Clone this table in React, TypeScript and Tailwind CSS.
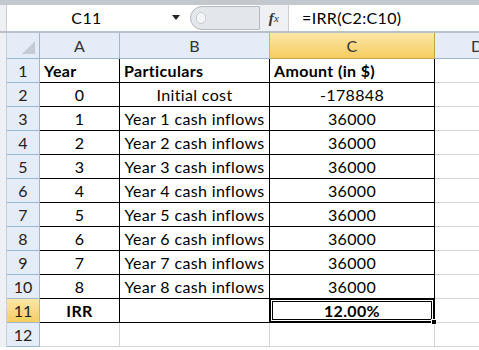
const rows: [string, string, string, string][] = [
  ["1", "Year", "Particulars", "Amount (in $)"],
  ["2", "0", "Initial cost", "-178848"],
  ["3", "1", "Year 1 cash inflows", "36000"],
  ["4", "2", "Year 2 cash inflows", "36000"],
  ["5", "3", "Year 3 cash inflows", "36000"],
  ["6", "4", "Year 4 cash inflows", "36000"],
  ["7", "5", "Year 5 cash inflows", "36000"],
  ["8", "6", "Year 6 cash inflows", "36000"],
  ["9", "7", "Year 7 cash inflows", "36000"],
  ["10", "8", "Year 8 cash inflows", "36000"],
];

function RowHead({ n, active }: { n: string; active?: boolean }) {
  return (
    <div
      className={`flex h-full w-[33px] shrink-0 items-center justify-center border-r border-b border-[#9eb6ce] tracking-normal text-[#222] ${
        active ? "bg-gradient-to-b from-[#fbe7a6] to-[#f5cd5f]" : "bg-[#e4ecf7]"
      }`}
    >
      {n}
    </div>
  );
}

export default function App() {
  return (
    <div
      className="h-[350px] w-[479px] overflow-hidden bg-white text-[16px] leading-none tracking-[0.35px] text-black"
      style={{ fontFamily: "Lato, 'Liberation Sans', sans-serif" }}
    >
      {/* formula bar */}
      <div className="flex h-[33px] border-t-[5px] border-b-2 border-[#b9c0c9] border-t-[#c3c8cf] bg-white">
        <div className="w-[7px] shrink-0 border-r border-[#c9ced5] bg-[#eef0f3]" />
        <div className="relative flex w-[183px] shrink-0 items-center justify-center">
          <span className="pr-[24px]">C11</span>
          <span className="absolute right-[10px] top-[10px] h-0 w-0 border-x-[4px] border-t-[5px] border-x-transparent border-t-[#222]" />
        </div>
        <div className="my-[1px] flex w-[70px] shrink-0 items-center rounded-l-full border border-[#b3b9c2] bg-[#e3e6ea] pl-[5px]">
          <span className="h-[12px] w-[10px] rounded-full border border-[#c9ccd1] bg-[#f3f4f6]" />
        </div>
        <div className="flex w-[28px] shrink-0 items-center justify-center bg-[#eef0f3] text-[15px] italic text-[#333]" style={{ fontFamily: "'Liberation Serif', serif" }}>
          <span className="font-bold">f</span>
          <span className="text-[11px]">x</span>
        </div>
        <div className="flex flex-1 items-center border-l border-[#c9ced5] pl-[13px]">=IRR(C2:C10)</div>
      </div>

      {/* column headers */}
      <div className="flex h-[26px]">
        <div className="w-[7px] shrink-0 border-r border-[#c9ced5] bg-[#eef0f3]" />
        <div className="relative w-[33px] shrink-0 border-r border-b border-[#9eb6ce] bg-[#e4ecf7]">
          <span className="absolute right-[4px] bottom-[4px] h-0 w-0 border-l-[13px] border-b-[13px] border-l-transparent border-b-[#c5cbd3]" />
        </div>
        <div className="flex w-[80px] shrink-0 items-center justify-center border-r border-b border-[#9eb6ce] bg-[#e4ecf7] text-[#333]">A</div>
        <div className="flex w-[150px] shrink-0 items-center justify-center border-r border-b border-[#9eb6ce] bg-[#e4ecf7] text-[#333]">B</div>
        <div className="flex w-[165px] shrink-0 items-center justify-center border-r border-b border-[#c7a24a] bg-gradient-to-b from-[#fbe7a6] to-[#f5cd5f] text-[#333]">C</div>
        <div className="flex flex-1 items-center border-b border-[#9eb6ce] bg-[#e4ecf7] pl-[36px] text-[#333]">D</div>
      </div>

      {rows.map(([n, a, b, c], i) => (
        <div key={n} className="flex h-[24px]">
          <div className="w-[7px] shrink-0 border-r border-[#c9ced5] bg-[#eef0f3]" />
          <RowHead n={n} />
          <div className={`flex w-[80px] shrink-0 items-center border-r border-b border-black ${i === 0 ? "pl-[4px] font-bold" : "justify-center"}`}>{a}</div>
          <div className={`flex w-[150px] shrink-0 items-center border-r border-b border-black ${i === 0 ? "pl-[4px] font-bold" : "justify-center"}`}>{b}</div>
          <div className={`flex w-[165px] shrink-0 items-center border-r border-b border-black ${i === 0 ? "pl-[4px] font-bold" : "justify-center"}`}>{c}</div>
          <div className="flex-1 border-b border-[#d4d4d4]" />
        </div>
      ))}

      {/* row 11 */}
      <div className="flex h-[24px]">
        <div className="w-[7px] shrink-0 border-r border-[#c9ced5] bg-[#eef0f3]" />
        <RowHead n="11" active />
        <div className="flex w-[80px] shrink-0 items-center justify-center border-r border-b border-black font-bold">IRR</div>
        <div className="w-[150px] shrink-0 border-b border-black" />
        <div className="relative -mt-[1px] -ml-[1px] flex h-[25px] w-[166px] shrink-0 border-2 border-black p-[1px]">
          <div className="flex flex-1 items-center justify-center border border-black font-bold">12.00%</div>
          <span className="absolute -right-[4px] -bottom-[4px] h-[6px] w-[6px] border border-white bg-black" />
        </div>
        <div className="flex-1 border-b border-[#d4d4d4]" />
      </div>

      {/* row 12 */}
      <div className="flex h-[24px]">
        <div className="w-[7px] shrink-0 border-r border-[#c9ced5] bg-[#eef0f3]" />
        <RowHead n="12" />
        <div className="w-[80px] shrink-0 border-r border-b border-[#d4d4d4]" />
        <div className="w-[150px] shrink-0 border-r border-b border-[#d4d4d4]" />
        <div className="w-[165px] shrink-0 border-r border-b border-[#d4d4d4]" />
        <div className="flex-1 border-b border-[#d4d4d4]" />
      </div>
    </div>
  );
}
